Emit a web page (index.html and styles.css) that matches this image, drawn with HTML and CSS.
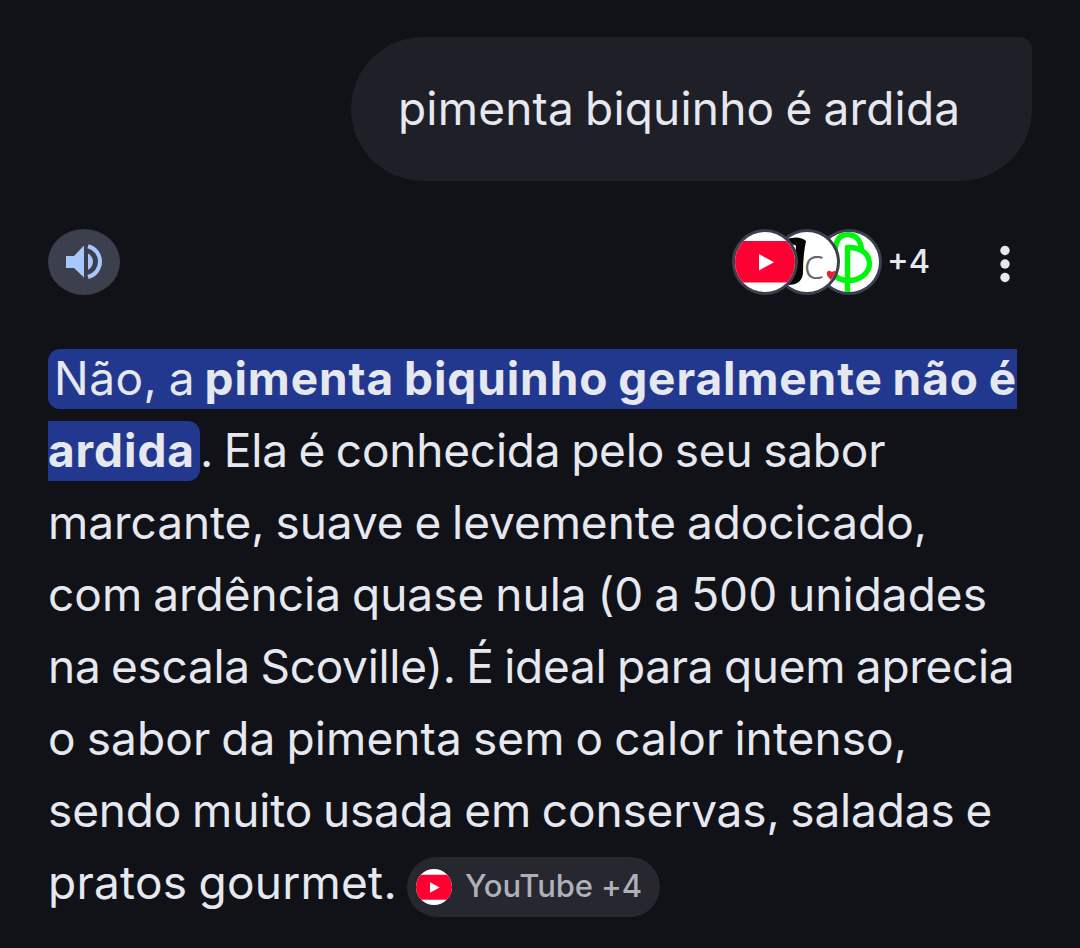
FILE: index.html
```html
<!DOCTYPE html>
<html lang="pt-BR">
<head>
<meta charset="utf-8">
<title>pimenta biquinho é ardida</title>
<link rel="stylesheet" href="styles.css">
</head>
<body>
<main class="page">
  <div class="query">pimenta biquinho é ardida</div>

  <div class="toolbar">
    <button class="speak" aria-label="Ouvir">
      <svg width="72" height="66" viewBox="0 0 72 66">
        <path fill="#a8c7fa" d="M18 27v12h8l10 9.500v-32L26 27zM40 24.600c3 1.300 5 4.600 5 8s-2 7-5 8.400z"/>
        <path fill="none" stroke="#a8c7fa" stroke-width="4" d="M40 17.200C47 19 52 25.200 52 32.600S47 46.200 40 48"/>
      </svg>
    </button>
    <div class="sources">
      <svg class="badge first" width="66" height="66" viewBox="0 0 66 66">
        <clipPath id="disc"><circle cx="33" cy="33" r="30"/></clipPath>
        <circle cx="33" cy="33" r="33" fill="#3b3f50"/>
        <g clip-path="url(#disc)">
          <rect width="66" height="66" fill="#fff"/>
          <rect x="1" y="12" width="64" height="41.500" rx="9" fill="#ff0033"/>
          <path d="M27 25v16.500l15-8.200z" fill="#fff"/>
        </g>
      </svg>
      <svg class="badge second" width="66" height="66" viewBox="0 0 66 66">
        <circle cx="33" cy="33" r="33" fill="#3b3f50"/>
        <g clip-path="url(#disc)">
          <rect width="66" height="66" fill="#fff"/>
          <path d="M12 10Q26 6 32 12Q29 26 29 44Q28 56 14 56L14 49Q20 50 20 43L22 17Q21 14 12 17z" fill="#050505"/>
          <text class="letter" x="29.500" y="50">c</text>
          <path d="M53 43c2-2.500 4-1 5 0 2-2 5-1 5 1l-6 7c-2-2-5-5-4-8z" fill="#e3242b"/>
        </g>
      </svg>
      <svg class="badge third" width="66" height="66" viewBox="0 0 66 66">
        <circle cx="33" cy="33" r="33" fill="#3b3f50"/>
        <g clip-path="url(#disc)">
          <rect width="66" height="66" fill="#fff"/>
          <path d="M31.500 64V18.500H35C45 19 53.500 25 53.500 34.500S44 51.500 32 51.500C24 51.500 19 48 15 43M19 22C20 11 24 5.500 31 5.500C40 5.500 45 11 45.500 21" fill="none" stroke="#00f50c" stroke-width="5.400" stroke-linejoin="round"/>
        </g>
      </svg>
      <span class="more-count">+4</span>
    </div>
    <svg class="menu" width="12" height="40" viewBox="0 0 12 40" fill="#e6e8f0">
      <circle cx="6" cy="6.500" r="4.700"/><circle cx="6" cy="20" r="4.700"/><circle cx="6" cy="33.500" r="4.700"/>
    </svg>
  </div>

  <div class="answer">
    <div class="line"><mark class="hl-start"><span class="t1">Não, a</span><b class="t2">pimenta biquinho geralmente não é</b></mark></div>
    <div class="line"><mark class="hl-end"><b class="t3">ardida</b></mark><span class="t4">. Ela é conhecida pelo seu sabor</span></div>
    <div class="line"><span class="t5">marcante, suave e levemente adocicado,</span></div>
    <div class="line"><span class="t6">com ardência quase nula (0 a 500 unidades</span></div>
    <div class="line"><span class="t7">na escala Scoville). É ideal para quem aprecia</span></div>
    <div class="line"><span class="t8">o sabor da pimenta sem o calor intenso,</span></div>
    <div class="line"><span class="t9">sendo muito usada em conservas, saladas e</span></div>
    <div class="line"><span class="t10">pratos gourmet.</span>
      <span class="chip">
        <svg width="36" height="36" viewBox="0 0 36 36">
          <clipPath id="dot"><circle cx="18" cy="18" r="18"/></clipPath>
          <g clip-path="url(#dot)">
            <rect width="36" height="36" fill="#fff"/>
            <rect y="5.800" width="36" height="25" rx="3" fill="#ff0033"/>
            <path d="M14 13.300v10.400l9.600-5.200z" fill="#fff"/>
          </g>
        </svg>
        <span class="chip-label">YouTube +4</span>
      </span>
    </div>
  </div>
</main>
</body>
</html>
```
FILE: styles.css
```css
* { box-sizing: border-box; }

body {
  margin: 0;
  background: #101217;
  color: #e6e8f0;
  font-family: Inter, "Liberation Sans", sans-serif;
}

.page {
  height: 948px;
  padding: 37px 48px 0;
  display: flex;
  flex-direction: column;
  overflow: hidden;
}

.query {
  align-self: flex-end;
  width: 681px;
  height: 144px;
  padding: 0 0 2px 47px;
  line-height: 142px;
  font-size: 46px;
  letter-spacing: 0.18px;
  word-spacing: -2px;
  white-space: nowrap;
  background: #1f1f27;
  border-radius: 72px 12px 72px 72px;
}

.toolbar {
  display: flex;
  align-items: center;
  height: 66px;
  margin-top: 48px;
}

.speak {
  display: block;
  width: 72px;
  height: 66px;
  padding: 0;
  border: 0;
  border-radius: 36px / 33px;
  background: #3b3f4e;
}

.speak svg { display: block; }

.sources {
  display: flex;
  align-items: center;
  width: 200px;
  margin-left: 612px;
}

.badge { flex: none; margin-right: -24px; }
.first { position: relative; z-index: 2; }
.second { position: relative; z-index: 1; }
.third { margin-right: 5px; }

.letter {
  font: 300 43px "Open Sans", sans-serif;
  fill: #666;
}

.more-count {
  font-size: 32.5px;
  font-weight: 500;
  line-height: 60px;
}

.menu { margin: 4px 0 0 67px; }

.answer {
  margin-top: 48px;
  font-size: 46px;
  white-space: nowrap;
  word-spacing: -2px;
}

.line {
  display: flex;
  align-items: center;
  height: 72px;
  line-height: 58px;
}

.line > span:first-child,
.line > .t4 { padding-bottom: 2px; }

mark {
  display: flex;
  height: 60px;
  color: inherit;
  background: #22388f;
}

.hl-start {
  width: 969px;
  padding-left: 6px;
  border-radius: 12px 0 0 12px;
}

.hl-end {
  width: 152px;
  border-radius: 0 12px 12px 0;
}

.t1 { width: 151px; letter-spacing: 0.5px; }
.t2 { letter-spacing: 0.91px; }
.t3 { letter-spacing: 0.9px; }
.t4 { letter-spacing: -0.21px; }
.t5 { letter-spacing: -0.06px; }
.t6 { letter-spacing: 0.01px; }
.t7 { letter-spacing: -0.3px; }
.t8 { letter-spacing: 0.09px; }
.t9 { letter-spacing: -0.15px; }
.t10 { width: 359px; letter-spacing: 0.25px; }

.chip {
  display: flex;
  align-items: center;
  width: 253px;
  height: 60px;
  margin-top: 8px;
  padding-left: 9px;
  gap: 13px;
  border-radius: 30px;
  background: #26272f;
  color: #aeb0ba;
  word-spacing: 0;
}

.chip-label {
  padding-bottom: 2px;
  font-size: 31px;
  font-weight: 500;
  letter-spacing: -0.1px;
}
```
